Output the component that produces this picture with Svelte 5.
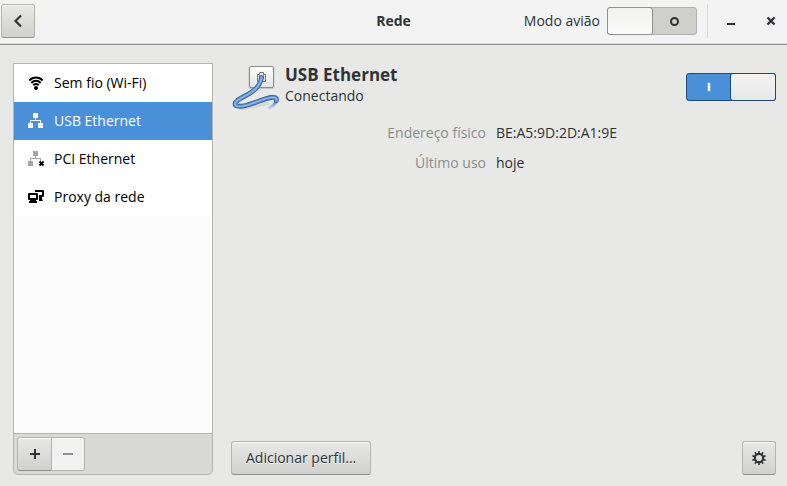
<script>
  let airplane = $state(false);
  let wired = $state(true);
  let selected = $state(1);
  const devices = [
    { name: 'Sem fio (Wi-Fi)', icon: 'wifi' },
    { name: 'USB Ethernet', icon: 'wired' },
    { name: 'PCI Ethernet', icon: 'unplugged' },
    { name: 'Proxy da rede', icon: 'proxy' }
  ];
</script>

{#snippet deviceIcon(kind)}
  <svg width="16" height="16" viewBox="0 0 16 16" aria-hidden="true">
    {#if kind === 'wifi'}
      <g fill="none" stroke="currentColor" stroke-width="2">
        <path d="M1.300 5.500C3.500 3.200 5.500 2.500 8 2.500s4.500.7 6.700 3" />
        <path d="M3.300 8C4.800 6.500 6.200 5.800 8 5.800s3.200.7 4.700 2.200" />
        <path d="M5.300 10.300C6.200 9.500 7 9.100 8 9.100s1.800.4 2.700 1.200" />
      </g>
      <circle cx="8" cy="13" r="2" fill="currentColor" />
    {:else if kind === 'proxy'}
      <path d="M7 1h8q1 0 1 1v5q0 1-1 1h-1v2l1 2h-4V6h3V3H7z" fill="currentColor" />
      <path fill-rule="evenodd" d="M1 4h8q1 0 1 1v5q0 1-1 1H8v1h1v2H1v-2h1v-1H1q-1 0-1-1V5q0-1 1-1zM2 6v3h6V6z" fill="currentColor" />
    {:else}
      <g fill={kind === 'unplugged' ? '#a6a6a6' : 'currentColor'}>
        <path d="M5 0h5v5H8v2h5v3h-1V8H3v2H2V7h5V5H5z" />
        <path d="M0 10h5v5H0z" />
        {#if kind === 'wired'}<path d="M10 10h5v5h-5z" />{/if}
      </g>
      {#if kind === 'unplugged'}
        <path d="M11.500 10.500l4 4m0-4l-4 4" stroke="#000" stroke-width="2" />
      {/if}
    {/if}
  </svg>
{/snippet}

<div class="window">
  <header>
    <button class="btn square" aria-label="Voltar">
      <svg width="16" height="16" viewBox="0 0 16 16"><path d="M11 2.500L5.500 8l5.500 5.500" fill="none" stroke="#2e3436" stroke-width="2.200" /></svg>
    </button>
    <h1>Rede</h1>
    <div class="controls">
      <label class="airplane">Modo avião <input class="switch" type="checkbox" role="switch" bind:checked={airplane} /></label>
      <span class="separator"></span>
      <button class="wm" aria-label="Minimizar">
        <svg width="16" height="16" viewBox="0 0 16 16"><path d="M4 10h8v2H4z" fill="#2e3436" /></svg>
      </button>
      <button class="wm" aria-label="Fechar">
        <svg width="16" height="16" viewBox="0 0 16 16"><path d="M4.500 4.500l7 7m0-7l-7 7" stroke="#2e3436" stroke-width="2.400" /></svg>
      </button>
    </div>
  </header>

  <div class="content">
    <aside>
      <nav>
        {#each devices as device, i}
          <button class="row" class:selected={selected === i} onclick={() => (selected = i)}>
            {@render deviceIcon(device.icon)}
            <span>{device.name}</span>
          </button>
        {/each}
      </nav>
      <div class="toolbar">
        <button class="btn square add" aria-label="Adicionar">
          <svg width="16" height="16" viewBox="0 0 16 16"><path d="M7 3h2v4h4v2H9v4H7V9H3V7h4z" fill="#2e3436" /></svg>
        </button>
        <button class="btn square remove" aria-label="Remover" disabled>
          <svg width="16" height="16" viewBox="0 0 16 16"><path d="M3 7h10v2H3z" fill="#8e918f" /></svg>
        </button>
      </div>
    </aside>

    <main>
      <div class="device">
        <svg width="48" height="48" viewBox="0 0 48 48" aria-hidden="true">
          <defs>
            <linearGradient id="plate" x1="0" y1="0" x2="0" y2="1">
              <stop offset="0" stop-color="#fff" /><stop offset="1" stop-color="#e3e3e2" />
            </linearGradient>
            <linearGradient id="fade" gradientUnits="userSpaceOnUse" x1="0" y1="38" x2="0" y2="46">
              <stop offset="0" stop-color="#3e70b5" /><stop offset="1" stop-color="#8eb2e0" stop-opacity=".3" />
            </linearGradient>
          </defs>
          <rect x="17.500" y="3.500" width="26" height="22.500" rx="2" fill="#000" opacity=".15" />
          <rect x="18.500" y="3.500" width="24" height="21" rx="1.500" fill="url(#plate)" stroke="#8c8e8b" />
          <path d="M26.500 18.500v-7h2v-2h4v2h2v7z" fill="#e6e6e4" stroke="#777a76" />
          <path d="M28.500 12v4m4-4v4" stroke="#8f928e" />
          <path d="M8 45.500c10 0 18-3 29-5" fill="none" stroke="#000" stroke-width="3" opacity=".08" />
          <path d="M45.500 36c-.5 4-3 7.500-8 9.500" fill="none" stroke="url(#fade)" stroke-width="3" />
          <g fill="none" stroke-linecap="round" stroke-linejoin="round">
            <path d="M30.500 14.500C29 24 22 29 13 33.500 8 36 4 38.500 4 41c0 3 6.500 2.500 11.500 1.300C24 40 33 35.500 40 34.500c4.500-.7 6 .5 5.300 3" stroke="#34609f" stroke-width="4.800" />
            <path d="M30.500 14.500C29 24 22 29 13 33.500 8 36 4 38.500 4 41c0 3 6.500 2.500 11.500 1.300C24 40 33 35.500 40 34.500c4.500-.7 6 .5 5.300 3" stroke="#5f91d1" stroke-width="3.200" />
            <path d="M30.500 14.500C29 24 22 29 13 33.500 8 36 4 38.500 4 41c0 3 6.500 2.500 11.500 1.300C24 40 33 35.500 40 34.500c4.500-.7 6 .5 5.300 3" stroke="#98bbe7" stroke-width="1.200" />
          </g>
        </svg>
        <div class="title">
          <h2>USB Ethernet</h2>
          <p>Conectando</p>
        </div>
        <input class="switch" type="checkbox" role="switch" aria-label="USB Ethernet" bind:checked={wired} />
      </div>

      <dl>
        <dt>Endereço físico</dt><dd>BE:A5:9D:2D:A1:9E</dd>
        <dt>Último uso</dt><dd>hoje</dd>
      </dl>

      <footer>
        <button class="btn">Adicionar perfil...</button>
        <button class="btn square" aria-label="Opções">
          <svg width="16" height="16" viewBox="0 0 16 16">
            <circle cx="8" cy="8" r="4.200" fill="none" stroke="#2e3436" stroke-width="2.200" />
            {#each [0, 36, 72, 108, 144, 180, 216, 252, 288, 324] as a}
              <path d="M7.200 1h1.600v2.500H7.200z" fill="#2e3436" transform="rotate({a} 8 8)" />
            {/each}
          </svg>
        </button>
      </footer>
    </main>
  </div>
</div>

<style>
  :global(body) { margin: 0; }
  .window, .window * { box-sizing: border-box; }
  .window {
    min-height: 100vh;
    display: flex;
    flex-direction: column;
    background: #e8e8e6;
    color: #2e3436;
    font: 14px/20px "Open Sans", "Noto Sans", sans-serif;
  }
  button, input { font: inherit; color: inherit; margin: 0; }
  svg { display: block; flex: none; }
  h1, h2, p, dl, dd { margin: 0; }

  header {
    display: grid;
    grid-template-columns: 1fr auto 1fr;
    align-items: center;
    height: 45px;
    padding: 0 1px 2px;
    background: #f3f3f3;
    border-bottom: 1px solid #8f918c;
    box-shadow: inset 0 -1px #dcdcda;
  }
  h1 { font-size: 14px; line-height: 20px; font-weight: 700; }
  .controls { display: flex; align-items: center; justify-content: flex-end; }
  .airplane { display: flex; align-items: center; gap: 7px; white-space: nowrap; }
  .separator { width: 1px; height: 34px; margin: 0 11px 0 10px; background: #dcdcdc; }
  .wm { padding: 4px; border: 0; background: none; }
  .wm + .wm { margin: 0 3px 0 16px; }

  .btn {
    display: flex;
    align-items: center;
    justify-content: center;
    height: 34px;
    padding: 0 14px;
    border: 1px solid #b4b4b1;
    border-bottom-color: #8f918c;
    border-radius: 3px;
    background: linear-gradient(#e8e8e7, #d0d0ce);
    box-shadow: inset 0 1px #f8f8f8;
    text-shadow: 0 1px #f4f4f4;
  }
  .square { width: 34px; padding: 0; }

  .switch {
    appearance: none;
    flex: none;
    display: flex;
    align-items: center;
    width: 90px;
    height: 28px;
    border: 1px solid #b0b1ae;
    border-radius: 3px;
    background: #cfcfcd;
  }
  .switch::before {
    content: "";
    width: 46px;
    height: 28px;
    margin: -1px;
    box-sizing: border-box;
    border: 1px solid #8f918c;
    border-radius: 3px;
    background: linear-gradient(#f1f1f0, #fbfbfb);
  }
  .switch::after {
    content: "";
    width: 9px;
    height: 9px;
    margin: 0 auto;
    box-sizing: border-box;
    border: 2px solid #2e3436;
    border-radius: 50%;
  }
  .switch:checked {
    flex-direction: row-reverse;
    border-color: #1c4a7d;
    background: #4a90d9;
  }
  .switch:checked::before { border-color: #1c4a7d; background: linear-gradient(#f4f4f4, #e7e7e6); }
  .switch:checked::after {
    width: 2px;
    height: 8px;
    border: 0;
    border-radius: 0;
    background: #fff;
    box-shadow: 0 0 2px #d4e6f8;
  }

  .content { flex: 1; display: flex; gap: 18px; padding: 18px 11px 11px 13px; }
  aside {
    width: 200px;
    flex: none;
    display: flex;
    flex-direction: column;
    border: 1px solid #b4b4b1;
    border-radius: 0 0 5px 5px;
    background: #d8d8d6;
  }
  nav { flex: 1; display: flex; flex-direction: column; background: #fcfcfc; }
  .row {
    display: flex;
    align-items: center;
    gap: 10px;
    height: 38px;
    padding: 0 14px;
    border: 0;
    background: #fff;
    color: #000;
    text-align: left;
  }
  .row.selected { background: #4a90d9; color: #fff; }
  .toolbar { display: flex; padding: 3px; border-top: 1px solid #b4b4b1; }
  .add { width: 35px; border-radius: 3px 0 0 3px; }
  .remove {
    width: 33px;
    border-left: 0;
    border-bottom-color: #b4b4b1;
    border-radius: 0 3px 3px 0;
    background: #f1f1f1;
  }

  main { flex: 1; min-width: 0; display: flex; flex-direction: column; }
  .device { display: flex; align-items: center; height: 48px; }
  .title { flex: 1; margin-left: 6px; padding-bottom: 4px; }
  h2 { font-size: 17px; line-height: 22px; font-weight: 700; }
  dl {
    display: grid;
    grid-template-columns: 255px 1fr;
    gap: 10px;
    margin-top: 12px;
  }
  dt { text-align: right; color: #8b8e8f; }
  footer { display: flex; justify-content: space-between; margin-top: auto; }
</style>
